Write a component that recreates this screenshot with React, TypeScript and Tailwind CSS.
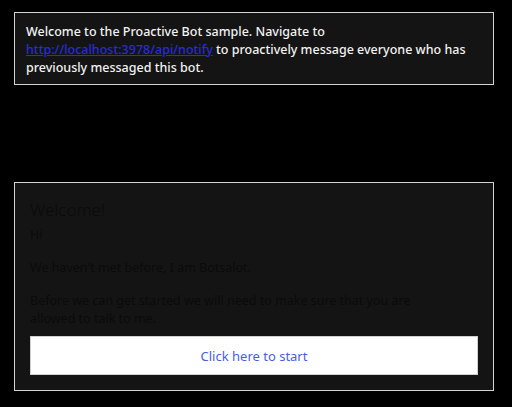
export default function App() {
  return (
    <div
      className="w-[512px] h-[407px] bg-black pt-3 pl-[14px] flex flex-col"
      style={{ fontFamily: '"Noto Sans", "Open Sans", sans-serif' }}
    >
      <div className="w-[480px] h-[73px] border border-[#d4d4d4] bg-[#141414] px-[11px] pt-[10px] text-[12.5px] leading-[18px] font-medium text-[#f2f2f2]">
        Welcome to the Proactive Bot sample. Navigate to{' '}
        <a href="#" className="text-[#2a2adf] underline">
          http://localhost:3978/api/notify
        </a>{' '}
        to proactively message everyone who has previously messaged this bot.
      </div>

      <div className="mt-[97px] w-[480px] h-[209px] border border-[#d4d4d4] bg-[#141414] px-[15px] pt-[16px] text-[#0b0b0b] flex flex-col">
        <div className="text-[17px] leading-[22px] font-light">Welcome!</div>
        <div className="mt-[5px] text-[12.5px] leading-[18px]">Hi</div>
        <div className="mt-[15px] text-[12.5px] leading-[18px]">We haven&apos;t met before, I am Botsalot.</div>
        <div className="mt-[15px] text-[12.5px] leading-[18px] w-[405px]">
          Before we can get started we will need to make sure that you are allowed to talk to me.
        </div>
        <button className="mt-[8px] w-[448px] h-[39px] bg-white border border-[#d0d0d0] pt-[2px] text-[13px] text-[#4a5fd9]">
          Click here to start
        </button>
      </div>
    </div>
  )
}
